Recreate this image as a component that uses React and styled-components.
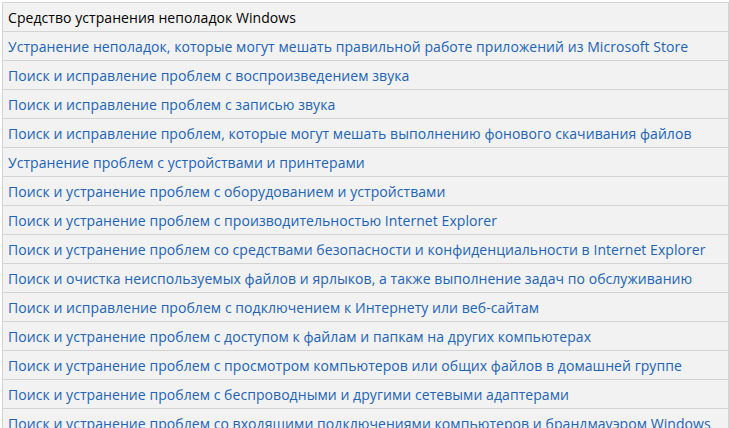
import styled, { createGlobalStyle } from "styled-components";

const GlobalStyle = createGlobalStyle`
  html, body {
    margin: 0;
    padding: 0;
    background: #ffffff;
  }
  body {
    font-family: "Open Sans", "Noto Sans", sans-serif;
  }
`;

const Page = styled.div`
  padding: 2px 2px 0 2px;
  height: 428px;
  overflow: hidden;
  box-sizing: border-box;
`;

const Table = styled.div`
  display: flex;
  flex-direction: column;
  width: 725px;
  border-top: 1px solid #d4d4d4;
  border-left: 1px solid #d4d4d4;
  border-right: 1px solid #d4d4d4;
  background: #f2f2f2;
`;

const Row = styled.div`
  height: 28px;
  border-bottom: 1px solid #d4d4d4;
  display: flex;
  align-items: center;
  padding-left: 5px;
  font-size: 14px;
  letter-spacing: 0.06px;
  white-space: nowrap;
  color: ${(p) => (p.$header ? "#000000" : "#2063b9")};
  cursor: ${(p) => (p.$header ? "default" : "pointer")};
`;

const items = [
  "Устранение неполадок, которые могут мешать правильной работе приложений из Microsoft Store",
  "Поиск и исправление проблем с воспроизведением звука",
  "Поиск и исправление проблем с записью звука",
  "Поиск и исправление проблем, которые могут мешать выполнению фонового скачивания файлов",
  "Устранение проблем с устройствами и принтерами",
  "Поиск и устранение проблем с оборудованием и устройствами",
  "Поиск и устранение проблем с производительностью Internet Explorer",
  "Поиск и устранение проблем со средствами безопасности и конфиденциальности в Internet Explorer",
  "Поиск и очистка неиспользуемых файлов и ярлыков, а также выполнение задач по обслуживанию",
  "Поиск и исправление проблем с подключением к Интернету или веб-сайтам",
  "Поиск и устранение проблем с доступом к файлам и папкам на других компьютерах",
  "Поиск и устранение проблем с просмотром компьютеров или общих файлов в домашней группе",
  "Поиск и устранение проблем с беспроводными и другими сетевыми адаптерами",
  "Поиск и устранение проблем со входящими подключениями компьютеров и брандмауэром Windows",
];

export default function App() {
  return (
    <>
      <GlobalStyle />
      <Page>
        <Table>
          <Row $header>Средство устранения неполадок Windows</Row>
          {items.map((text) => (
            <Row key={text}>{text}</Row>
          ))}
        </Table>
      </Page>
    </>
  );
}
